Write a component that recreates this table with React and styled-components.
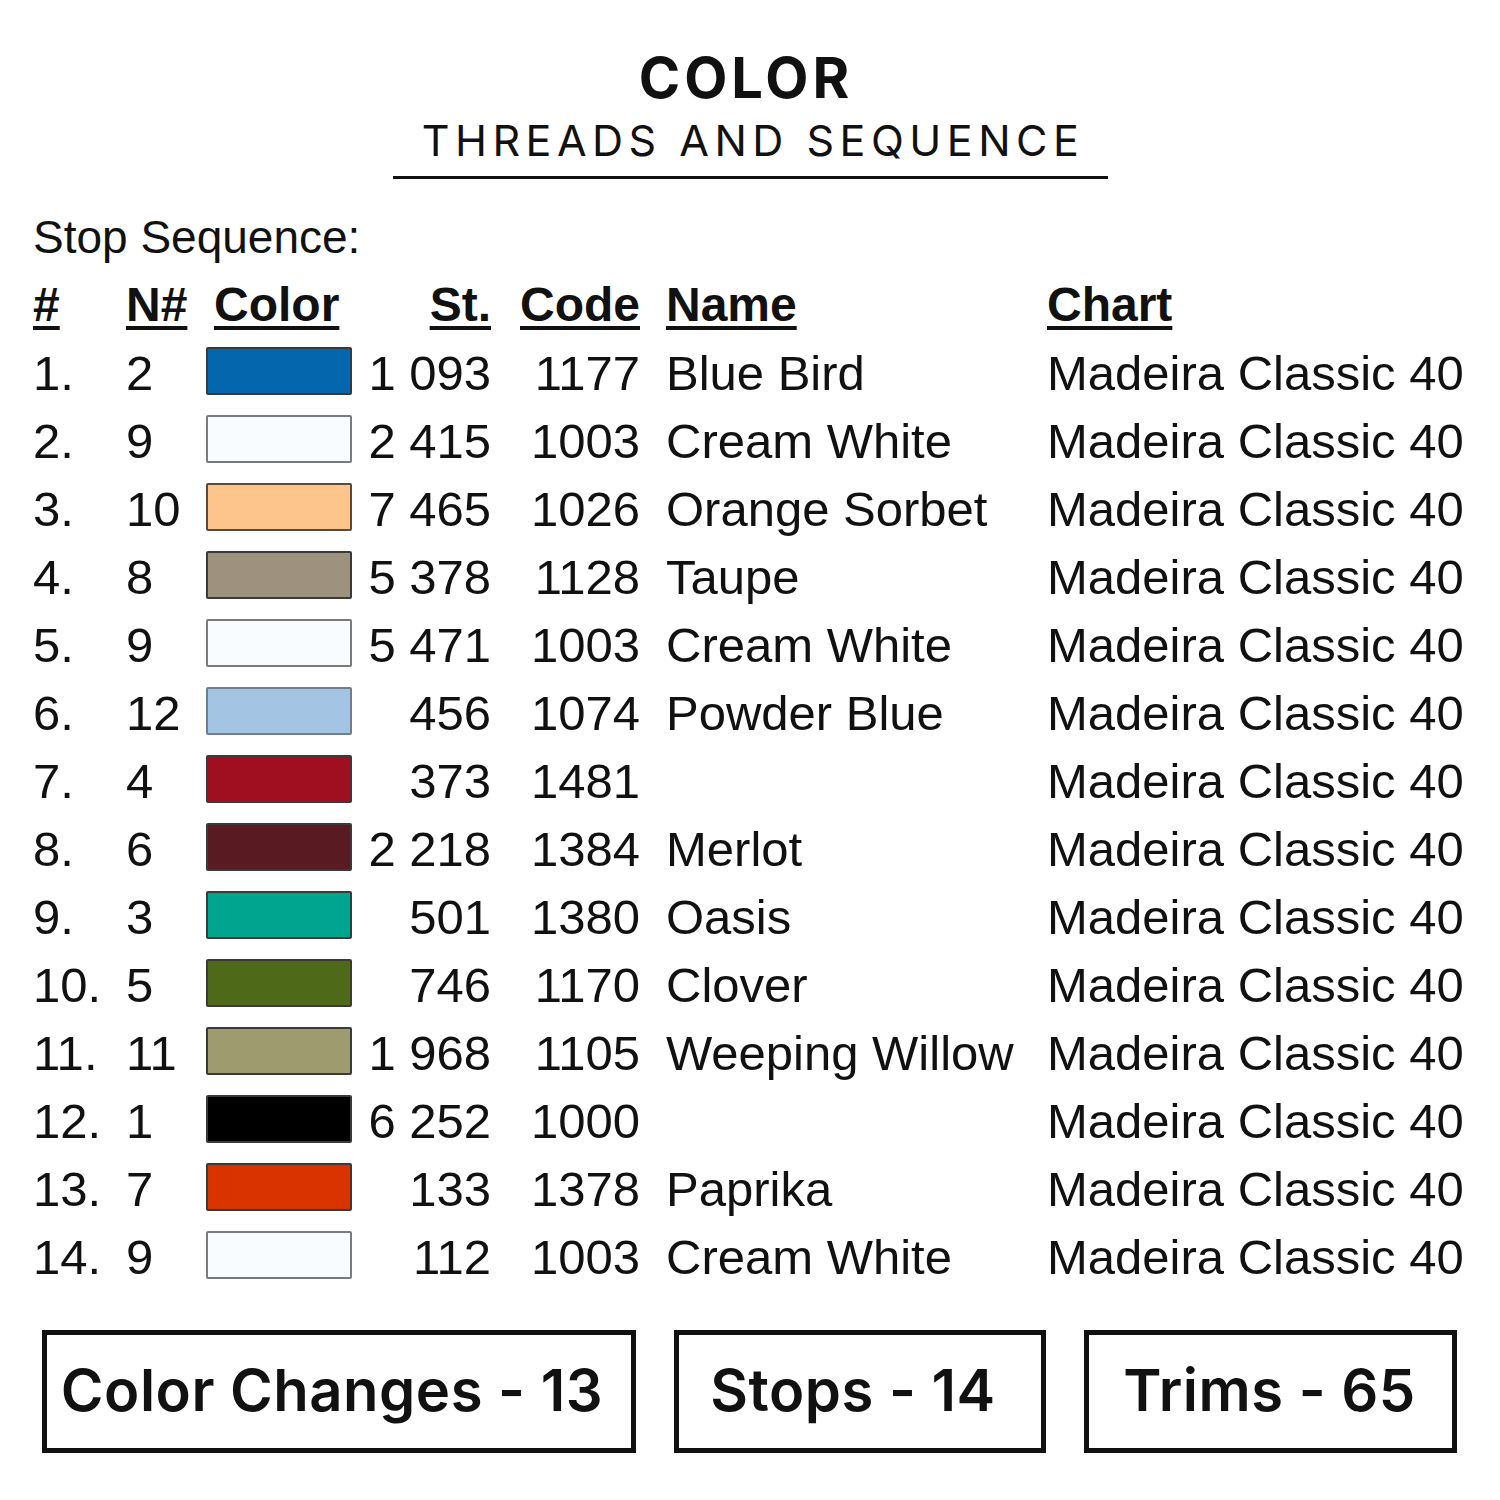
import React from 'react'
import styled, { createGlobalStyle } from 'styled-components'

const GlobalStyle = createGlobalStyle`
 html, body {
  margin: 0;
  padding: 0;
  background: #ffffff;
 }
 body {
  width: 1500px;
  height: 1500px;
  overflow: hidden;
 }
`

const Page = styled.div`
 width: 1500px;
 height: 1500px;
 background: #ffffff;
 color: #111111;
 display: flex;
 flex-direction: column;
`

const Header = styled.header`
 display: flex;
 flex-direction: column;
 align-items: center;
 padding-top: 42px;
`

const Title = styled.h1`
 margin: 0 0 0 -8px;
 font-family: Inter, 'Liberation Sans', sans-serif;
 font-weight: 700;
 font-size: 56px;
 line-height: 72px;
 letter-spacing: 4px;
 color: #111111;
`

const SubtitleWrap = styled.div`
 width: 715px;
 border-bottom: 3px solid #111111;
 text-align: center;
 padding-bottom: 10px;
`

const Subtitle = styled.h2`
 margin: 0;
 padding-left: 6px;
 font-family: Inter, 'Liberation Sans', sans-serif;
 font-weight: 400;
 font-size: 43px;
 line-height: 52px;
 letter-spacing: 5.5px;
 color: #111111;
`

const Table = styled.section`
 margin-top: 24px;
 padding-left: 33px;
 font-family: 'Liberation Sans', Arial, sans-serif;
`

const Caption = styled.div`
 font-size: 46px;
 line-height: 68px;
`

const Row = styled.div`
 display: grid;
 grid-template-columns: 93px 80px 146px 139px 149px 26px 381px auto;
 align-items: center;
 height: 68px;
 font-size: 49px;
 line-height: 68px;
 white-space: nowrap;
`

const Cell = styled.div`
 text-align: ${(p) => p.$align || 'left'};
 grid-column: ${(p) => p.$col};
`

const HeadCell = styled(Cell)`
 font-weight: 700;
 font-size: 48px;
 text-decoration: underline;
 text-decoration-thickness: 4px;
 text-underline-offset: 5px;
 padding-left: ${(p) => p.$indent || 0}px;
`

const Swatch = styled.div`
 grid-column: 3;
 height: 48px;
 margin-top: -4px;
 background: ${(p) => p.$color};
 border: 2px solid ${(p) => p.$edge || '#3a3a3a'};
 box-sizing: border-box;
 border-radius: 2px;
`

const Stats = styled.div`
 display: flex;
 justify-content: space-between;
 margin: 39px 43px 0 42px;
`

const StatBox = styled.div`
 width: ${(p) => p.$width}px;
 height: 123px;
 box-sizing: border-box;
 border: 5px solid #111111;
 display: flex;
 align-items: center;
 justify-content: center;
 font-family: Inter, 'Liberation Sans', sans-serif;
 font-weight: 600;
 font-size: 58px;
 letter-spacing: 0.5px;
 color: #111111;
 padding: 0 ${(p) => p.$nudge || 14}px 4px 0;
`

const threads = [
 { n: 2, color: '#0467ae', st: '1 093', code: '1177', name: 'Blue Bird' },
 { n: 9, color: '#f8fcfe', edge: '#7a7a7a', st: '2 415', code: '1003', name: 'Cream White' },
 { n: 10, color: '#fdc48c', edge: '#5a4a3a', st: '7 465', code: '1026', name: 'Orange Sorbet' },
 { n: 8, color: '#9e917e', st: '5 378', code: '1128', name: 'Taupe' },
 { n: 9, color: '#f8fcfe', edge: '#7a7a7a', st: '5 471', code: '1003', name: 'Cream White' },
 { n: 12, color: '#a4c4e4', edge: '#6f7f8f', st: '456', code: '1074', name: 'Powder Blue' },
 { n: 4, color: '#a00f20', st: '373', code: '1481', name: '' },
 { n: 6, color: '#5a1a22', st: '2 218', code: '1384', name: 'Merlot' },
 { n: 3, color: '#00a58f', st: '501', code: '1380', name: 'Oasis' },
 { n: 5, color: '#4e6918', st: '746', code: '1170', name: 'Clover' },
 { n: 11, color: '#9e9b6e', st: '1 968', code: '1105', name: 'Weeping Willow' },
 { n: 1, color: '#000000', st: '6 252', code: '1000', name: '' },
 { n: 7, color: '#d93300', st: '133', code: '1378', name: 'Paprika' },
 { n: 9, color: '#f8fcfe', edge: '#7a7a7a', st: '112', code: '1003', name: 'Cream White' },
]

export default function App() {
 return (
  <Page>
   <GlobalStyle />
   <Header>
    <Title>COLOR</Title>
    <SubtitleWrap>
     <Subtitle>THREADS AND SEQUENCE</Subtitle>
    </SubtitleWrap>
   </Header>

   <Table>
    <Caption>Stop Sequence:</Caption>
    <Row>
     <HeadCell $col={1}>#</HeadCell>
     <HeadCell $col={2}>N#</HeadCell>
     <HeadCell $col={3} $indent={8}>Color</HeadCell>
     <HeadCell $col={4} $align="right">St.</HeadCell>
     <HeadCell $col={5} $align="right">Code</HeadCell>
     <HeadCell $col={7}>Name</HeadCell>
     <HeadCell $col={8}>Chart</HeadCell>
    </Row>
    {threads.map((t, i) => (
     <Row key={i}>
      <Cell $col={1}>{i + 1}.</Cell>
      <Cell $col={2}>{t.n}</Cell>
      <Swatch $color={t.color} $edge={t.edge} />
      <Cell $col={4} $align="right">{t.st}</Cell>
      <Cell $col={5} $align="right">{t.code}</Cell>
      <Cell $col={7}>{t.name}</Cell>
      <Cell $col={8}>Madeira Classic 40</Cell>
     </Row>
    ))}
   </Table>

   <Stats>
    <StatBox $width={594}>Color Changes - 13</StatBox>
    <StatBox $width={372}>Stops - 14</StatBox>
    <StatBox $width={373} $nudge={2}>Trims - 65</StatBox>
   </Stats>
  </Page>
 )
}
